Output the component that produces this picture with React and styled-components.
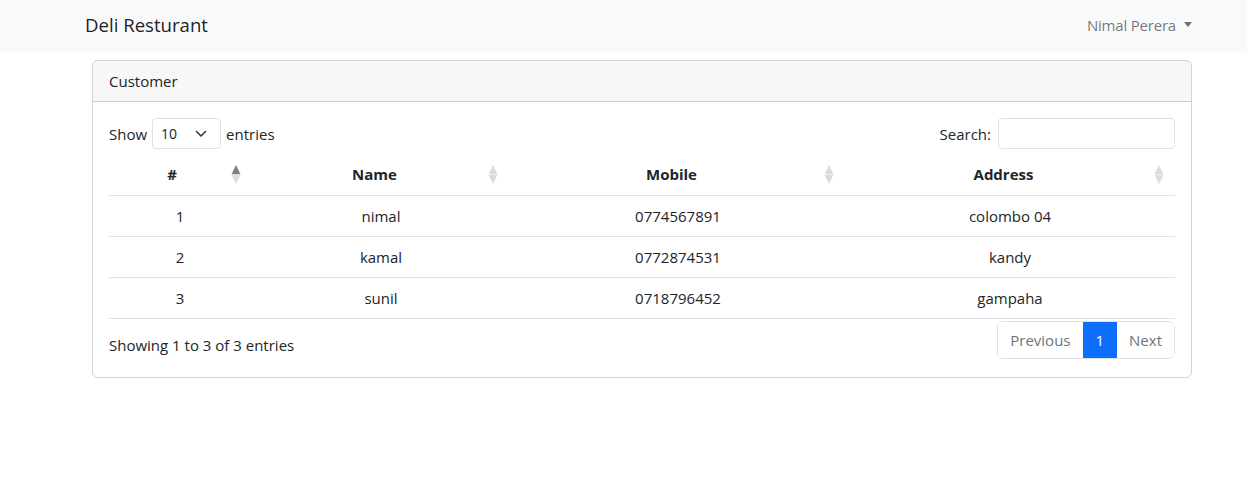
import React from 'react';
import styled, { createGlobalStyle } from 'styled-components';

const GlobalStyle = createGlobalStyle`
  * { box-sizing: border-box; }
  body {
    margin: 0;
    font-family: "Open Sans", "Liberation Sans", sans-serif;
    font-size: 15px;
    line-height: 24px;
    color: #212529;
    background: #fff;
  }
`;

const Navbar = styled.nav`
  height: 52px;
  background: #f8f9fa;
  display: flex;
  align-items: center;
  justify-content: space-between;
  padding: 0 55px 0 85px;
`;

const Brand = styled.div`
  font-size: 18.6px;
  line-height: 30px;
  color: rgba(0, 0, 0, 0.9);
  margin-top: -3px;
`;

const UserMenu = styled.div`
  display: flex;
  align-items: center;
  gap: 8px;
  font-size: 15px;
  letter-spacing: -0.2px;
  color: rgba(0, 0, 0, 0.55);
  margin-top: -3px;
`;

const Caret = styled.span`
  width: 0;
  height: 0;
  border-left: 4px solid transparent;
  border-right: 4px solid transparent;
  border-top: 5px solid rgba(0, 0, 0, 0.55);
`;

const Card = styled.div`
  margin: 8px 0 0 92px;
  width: 1100px;
  border: 1px solid rgba(0, 0, 0, 0.175);
  border-radius: 6px;
  overflow: hidden;
`;

const CardHeader = styled.div`
  padding: 8px 16px;
  background: rgba(0, 0, 0, 0.03);
  border-bottom: 1px solid rgba(0, 0, 0, 0.175);
`;

const CardBody = styled.div`
  padding: 16px 16px 18px;
`;

const TopRow = styled.div`
  display: flex;
  justify-content: space-between;
  align-items: center;
  height: 31px;
`;

const Label = styled.label`
  display: flex;
  align-items: center;
  gap: ${(p) => p.gap || 5}px;
`;

const SelectBox = styled.div`
  width: 69px;
  height: 31px;
  border: 1px solid #dee2e6;
  border-radius: 4px;
  display: flex;
  align-items: center;
  justify-content: space-between;
  padding: 0 13px 0 8px;
  font-size: 14px;
`;

const SearchInput = styled.input`
  width: 177px;
  height: 31px;
  border: 1px solid #dee2e6;
  border-radius: 4px;
  font: inherit;
  outline: none;
`;

const Table = styled.table`
  width: 100%;
  table-layout: fixed;
  border-collapse: collapse;
  margin-top: 5px;
`;

const Th = styled.th`
  position: relative;
  text-align: center;
  padding: 8px ${(p) => p.pr || 21}px 8px 8px;
  font-weight: 700;
  border-bottom: 1px solid #dee2e6;
  height: 41px;
`;

const SortIcon = styled.svg`
  position: absolute;
  right: ${(p) => p.right || 10}px;
  top: 11px;
`;

const Td = styled.td`
  text-align: center;
  padding: 8px;
  border-bottom: 1px solid #dee2e6;
  height: 41px;
`;

const BottomRow = styled.div`
  display: flex;
  justify-content: space-between;
  align-items: flex-start;
  margin-top: 2px;
`;

const Info = styled.div`
  padding-top: 12px;
`;

const Pagination = styled.div`
  display: flex;
  border: 1px solid #dee2e6;
  border-radius: 6px;
  overflow: hidden;
`;

const PageLink = styled.div`
  padding: 6px 12px;
  line-height: 24px;
  color: ${(p) => (p.active ? '#fff' : '#6c757d')};
  background: ${(p) => (p.active ? '#0d6efd' : '#fff')};
  & + & {
    border-left: 1px solid ${(p) => (p.active ? '#0d6efd' : '#dee2e6')};
  }
`;

const Sort = ({ active, right }) => (
  <SortIcon width="10" height="19" viewBox="0 0 10 19" right={right}>
    <path d="M5 0 L9.5 9.3 L0.5 9.3 Z" fill={active ? '#7f7f7f' : '#dcdcdc'} />
    <path d="M0.5 9.7 L9.5 9.7 L5 19 Z" fill="#dcdcdc" />
  </SortIcon>
);

const customers = [
  { id: 1, name: 'nimal', mobile: '0774567891', address: 'colombo 04' },
  { id: 2, name: 'kamal', mobile: '0772874531', address: 'kandy' },
  { id: 3, name: 'sunil', mobile: '0718796452', address: 'gampaha' },
];

export default function App() {
  return (
    <>
      <GlobalStyle />
      <Navbar>
        <Brand>Deli Resturant</Brand>
        <UserMenu>
          Nimal Perera <Caret />
        </UserMenu>
      </Navbar>
      <Card>
        <CardHeader>Customer</CardHeader>
        <CardBody>
          <TopRow>
            <Label>
              Show
              <SelectBox>
                <span>10</span>
                <svg width="12" height="8" viewBox="0 0 12 8">
                  <path d="M1.5 1.5 L6 6 L10.5 1.5" fill="none" stroke="#343a40" strokeWidth="1.6" strokeLinecap="round" strokeLinejoin="round" />
                </svg>
              </SelectBox>
              entries
            </Label>
            <Label gap={7}>
              Search:
              <SearchInput />
            </Label>
          </TopRow>
          <Table>
            <colgroup>
              <col style={{ width: 142 }} />
              <col style={{ width: 260 }} />
              <col style={{ width: 334 }} />
              <col style={{ width: 330 }} />
            </colgroup>
            <thead>
              <tr>
                <Th pr={24}># <Sort active right={10} /></Th>
                <Th>Name <Sort right={13} /></Th>
                <Th>Mobile <Sort right={11} /></Th>
                <Th>Address <Sort right={11} /></Th>
              </tr>
            </thead>
            <tbody>
              {customers.map((c) => (
                <tr key={c.id}>
                  <Td>{c.id}</Td>
                  <Td>{c.name}</Td>
                  <Td>{c.mobile}</Td>
                  <Td>{c.address}</Td>
                </tr>
              ))}
            </tbody>
          </Table>
          <BottomRow>
            <Info>Showing 1 to 3 of 3 entries</Info>
            <Pagination>
              <PageLink>Previous</PageLink>
              <PageLink active>1</PageLink>
              <PageLink>Next</PageLink>
            </Pagination>
          </BottomRow>
        </CardBody>
      </Card>
    </>
  );
}
